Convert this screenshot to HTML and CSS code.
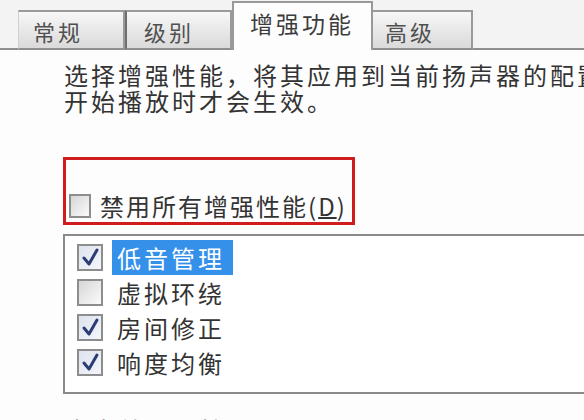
FILE: index.html
```html
<!DOCTYPE html>
<html lang="zh-CN">
<head>
    <meta charset="UTF-8" />
    <meta name="viewport" content="width=device-width, initial-scale=1.0">
    <title>扬声器属性 - 增强功能</title>
    <link rel="stylesheet" href="styles.css">
</head>
<body>
    <div class="tabs">
        <div class="tab tab-general">常规</div>
        <div class="tab tab-levels">级别</div>
        <div class="tab tab-active">增强功能</div>
        <div class="tab tab-advanced">高级</div>
    </div>

    <div class="panel">
        <p class="descripcion">选择增强性能，将其应用到当前扬声器的配置。更改将在下次<br>开始播放时才会生效。</p>

        <div class="marco-rojo">
            <label class="fila-deshabilitar">
                <span class="casilla"></span>
                <span class="texto">禁用所有增强性能(<u>D</u>)</span>
            </label>
        </div>

        <div class="lista">
            <div class="fila">
                <span class="casilla marcada">
                    <svg viewBox="0 0 22 23" width="22" height="23"><path d="M5 12 L10 18 L18 4" fill="none" stroke="#2c3c74" stroke-width="3" stroke-linecap="round" stroke-linejoin="round"/></svg>
                </span>
                <span class="etiqueta seleccionada">低音管理</span>
            </div>
            <div class="fila">
                <span class="casilla"></span>
                <span class="etiqueta">虚拟环绕</span>
            </div>
            <div class="fila">
                <span class="casilla marcada">
                    <svg viewBox="0 0 22 23" width="22" height="23"><path d="M5 12 L10 18 L18 4" fill="none" stroke="#2c3c74" stroke-width="3" stroke-linecap="round" stroke-linejoin="round"/></svg>
                </span>
                <span class="etiqueta">房间修正</span>
            </div>
            <div class="fila">
                <span class="casilla marcada">
                    <svg viewBox="0 0 22 23" width="22" height="23"><path d="M5 12 L10 18 L18 4" fill="none" stroke="#2c3c74" stroke-width="3" stroke-linecap="round" stroke-linejoin="round"/></svg>
                </span>
                <span class="etiqueta">响度均衡</span>
            </div>
        </div>

        <p class="grupo">声音效果属性</p>
    </div>
</body>
</html>
```

FILE: styles.css
```css
body {
    margin: 0;
    width: 584px;
    height: 420px;
    overflow: hidden;
    background-color: #fdfdfd;
    font-family: "Noto Sans CJK SC", "Liberation Sans", sans-serif;
    color: #333;
}

.tabs {
    display: flex;
    align-items: flex-end;
    height: 50px;
    padding-left: 18px;
    background-color: #f3f3f3;
    border-bottom: 2px solid #8e8e8e;
    box-sizing: border-box;
}

.tab {
    box-sizing: border-box;
    height: 40px;
    margin-bottom: -2px;
    padding-left: 14px;
    font-size: 22px;
    letter-spacing: 3px;
    line-height: 38px;
    color: #505050;
    background: linear-gradient(#f7f7f7, #dadada);
    border: 2px solid #9a9a9a;
    border-left: none;
    border-bottom: 2px solid #8e8e8e;
}

.tab-general {
    width: 107px;
    border-left: 1px solid #d0d0d0;
}

.tab-levels {
    width: 107px;
    padding-left: 17px;
    border-left: 2px solid #6e6e6e;
}

.tab-active {
    width: 141px;
    height: 49px;
    padding-left: 16px;
    line-height: 40px;
    color: #3c3c3c;
    background: #fdfdfd;
    border: 2px solid #999;
    border-bottom: none;
    font-size: 23px;
}

.tab-advanced {
    width: 100px;
    padding-left: 12px;
}

.panel {
    padding-left: 63px;
}

.descripcion {
    margin: 12px 0 0 1px;
    font-size: 24px;
    letter-spacing: 3px;
    line-height: 26px;
    white-space: nowrap;
}

.marco-rojo {
    box-sizing: border-box;
    width: 292px;
    height: 68px;
    margin-top: 43px;
    padding: 32px 0 0 3px;
    border: 3px solid #cf1d1d;
}

.fila-deshabilitar {
    display: flex;
    align-items: center;
    gap: 9px;
    font-size: 24px;
    letter-spacing: 2px;
    line-height: 28px;
}

.fila-deshabilitar .casilla {
    width: 22px;
    height: 24px;
}

.fila-deshabilitar u {
    text-decoration-thickness: 2px;
}

.casilla {
    box-sizing: border-box;
    display: flex;
    align-items: center;
    justify-content: center;
    width: 26px;
    height: 27px;
    border: 2px solid #8d8d8d;
    background: linear-gradient(135deg, #d6d6d6, #fbfbfb);
    flex-shrink: 0;
}

.casilla.marcada {
    background: linear-gradient(135deg, #dde2ee, #f4f6fa);
}

.lista {
    box-sizing: border-box;
    width: 560px;
    height: 160px;
    margin-top: 9px;
    padding: 4px 0 0 12px;
    border: 2px solid #8a8a8a;
    border-right: none;
    background-color: #fff;
}

.fila {
    display: flex;
    align-items: center;
    height: 35px;
    gap: 9px;
}

.etiqueta {
    display: block;
    padding: 0 8px 0 5px;
    height: 35px;
    font-size: 24px;
    letter-spacing: 3px;
    line-height: 35px;
}

.seleccionada {
    background-color: #3590ea;
    color: #fff;
}

.grupo {
    margin: 22px 0 0 2px;
    font-size: 24px;
    letter-spacing: 3px;
    line-height: 28px;
    color: #555;
}
```
